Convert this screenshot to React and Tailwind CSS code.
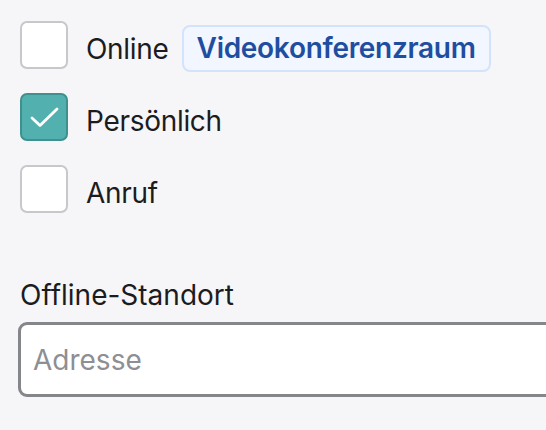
import React from "react";

function Box({ checked }) {
  if (checked) {
    return (
      <div className="w-[48px] h-[48px] shrink-0 rounded-[7px] border-2 border-[#3e918e] bg-[#52b0ae] flex items-center justify-center">
        <svg width="30" height="30" viewBox="0 0 30 30" fill="none">
          <path d="M3 16 L11 23.5 L28 7" stroke="white" strokeWidth="2.8" strokeLinecap="round" strokeLinejoin="round" />
        </svg>
      </div>
    );
  }
  return <div className="w-[48px] h-[48px] shrink-0 rounded-[7px] border-2 border-[#c7c7cc] bg-white" />;
}

export default function App() {
  return (
    <div className="w-[546px] h-[430px] overflow-hidden bg-[#f6f6f8] text-[#1c1c1e]" style={{ fontFamily: "Inter, 'Noto Sans', sans-serif" }}>
      <div className="pt-[21px] pl-[20px] flex flex-col gap-[24px]">
        <div className="flex items-center h-[48px]">
          <Box />
          <span className="ml-[18px] pt-[7px] text-[28px] leading-none tracking-[-0.3px]">Online</span>
          <span className="ml-[13px] mt-[6px] h-[47px] px-[13px] flex items-center rounded-[8px] border-2 border-[#d3e3fb] bg-[#f1f6ff] text-[#1f4ea1] text-[28px] font-semibold leading-none tracking-[-0.3px]">Videokonferenzraum</span>
        </div>
        <div className="flex items-center h-[48px]">
          <Box checked />
          <span className="ml-[18px] pt-[7px] text-[28px] leading-none tracking-[-0.3px]">Persönlich</span>
        </div>
        <div className="flex items-center h-[48px]">
          <Box />
          <span className="ml-[18px] pt-[7px] text-[28px] leading-none tracking-[-0.3px]">Anruf</span>
        </div>
      </div>
      <div className="mt-[68px] pl-[20px] text-[28px] leading-none">Offline-Standort</div>
      <div className="mt-[13px] ml-[18px] w-[560px] h-[75px] rounded-[9px] border-[3px] border-[#85858c] bg-white flex items-center pl-[12px]">
        <span className="text-[28px] text-[#8e8e93] leading-none">Adresse</span>
      </div>
    </div>
  );
}
